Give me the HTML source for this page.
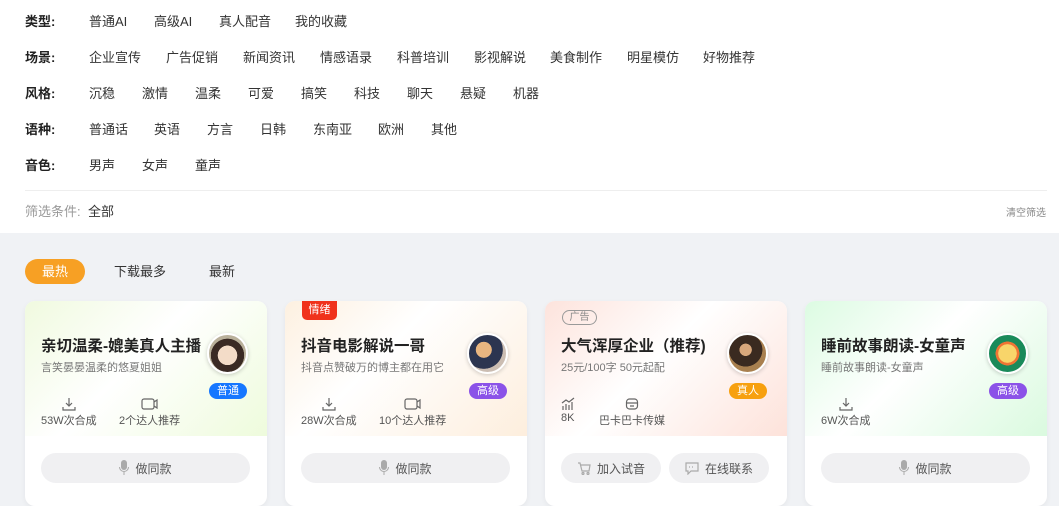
<!DOCTYPE html>
<html><head><meta charset="utf-8"><style>
*{margin:0;padding:0;box-sizing:border-box}
body{width:1059px;height:500px;overflow:hidden;background:#f0f2f5;font-family:"Liberation Sans","Noto Sans CJK SC",sans-serif;position:relative;color:#333}
.top{position:absolute;left:0;top:0;width:1059px;height:233px;background:#fff}
.a{position:absolute;white-space:nowrap;font-size:13px;line-height:16px}
.lb{font-weight:bold;color:#222}
.sep{position:absolute;left:25px;top:190px;width:1022px;height:1px;background:#eee}
.card{position:absolute;top:301px;width:242px;height:205px;border-radius:10px;background:#fff;overflow:hidden;box-shadow:0 2px 6px rgba(0,0,0,.05)}
.grad{position:absolute;left:0;top:0;width:100%;height:135px}
.t{position:absolute;left:16px;top:33px;font-size:15.5px;font-weight:bold;color:#222;white-space:nowrap}
.s{position:absolute;left:16px;top:58px;font-size:11px;color:#777;white-space:nowrap}
.av{position:absolute;left:182px;top:32px;width:41px;height:41px;border-radius:50%;border:2px solid #fff;box-shadow:0 1px 4px rgba(0,0,0,.2)}
.bd{position:absolute;left:184px;top:82px;width:38px;height:16px;border-radius:8px;color:#fff;font-size:11px;text-align:center;line-height:16px}
.st{position:absolute;top:96px;font-size:11px;color:#555;white-space:nowrap;text-align:center}
.st svg{display:block;margin:0 auto 1px}
.btn{position:absolute;top:152px;height:30px;border-radius:15px;background:#f0f0f2;font-size:12px;color:#555;display:flex;align-items:center;justify-content:center;gap:6px}
</style></head><body>
<div class="top"></div>
<div class="a lb" style="left:25px;top:14px">类型:</div>
<div class="a" style="left:89px;top:14px">普通AI</div><div class="a" style="left:154px;top:14px">高级AI</div><div class="a" style="left:219px;top:14px">真人配音</div><div class="a" style="left:295px;top:14px">我的收藏</div>
<div class="a lb" style="left:25px;top:50px">场景:</div>
<div class="a" style="left:89px;top:50px">企业宣传</div><div class="a" style="left:166px;top:50px">广告促销</div><div class="a" style="left:243px;top:50px">新闻资讯</div><div class="a" style="left:320px;top:50px">情感语录</div><div class="a" style="left:397px;top:50px">科普培训</div><div class="a" style="left:474px;top:50px">影视解说</div><div class="a" style="left:550px;top:50px">美食制作</div><div class="a" style="left:627px;top:50px">明星模仿</div><div class="a" style="left:703px;top:50px">好物推荐</div>
<div class="a lb" style="left:25px;top:86px">风格:</div>
<div class="a" style="left:89px;top:86px">沉稳</div><div class="a" style="left:142px;top:86px">激情</div><div class="a" style="left:195px;top:86px">温柔</div><div class="a" style="left:248px;top:86px">可爱</div><div class="a" style="left:301px;top:86px">搞笑</div><div class="a" style="left:354px;top:86px">科技</div><div class="a" style="left:407px;top:86px">聊天</div><div class="a" style="left:460px;top:86px">悬疑</div><div class="a" style="left:513px;top:86px">机器</div>
<div class="a lb" style="left:25px;top:122px">语种:</div>
<div class="a" style="left:89px;top:122px">普通话</div><div class="a" style="left:154px;top:122px">英语</div><div class="a" style="left:207px;top:122px">方言</div><div class="a" style="left:260px;top:122px">日韩</div><div class="a" style="left:313px;top:122px">东南亚</div><div class="a" style="left:378px;top:122px">欧洲</div><div class="a" style="left:431px;top:122px">其他</div>
<div class="a lb" style="left:25px;top:158px">音色:</div>
<div class="a" style="left:89px;top:158px">男声</div><div class="a" style="left:142px;top:158px">女声</div><div class="a" style="left:195px;top:158px">童声</div>
<div class="sep"></div>
<div class="a" style="left:25px;top:204px;color:#999">筛选条件:</div><div class="a" style="left:88px;top:204px">全部</div>
<div class="a" style="left:1006px;top:206px;font-size:10px;color:#888">清空筛选</div>

<div class="a" style="left:25px;top:259px;width:60px;height:25px;border-radius:13px;background:#f7a024;color:#fff;text-align:center;line-height:25px">最热</div>
<div class="a" style="left:114px;top:264px">下载最多</div>
<div class="a" style="left:209px;top:264px">最新</div>

<!-- card1 -->
<div class="card" style="left:25px">
<div class="grad" style="background:linear-gradient(135deg,#f0fadf 0%,#fff 45%,#eefbdc 100%)"></div>
<div class="t">亲切温柔-媲美真人主播</div><div class="s">言笑晏晏温柔的悠夏姐姐</div>
<div class="av" style="background:radial-gradient(circle at 50% 55%,#f3dcc8 0 35%,#3a2a24 36% 60%,#b9b09a 61%)"></div>
<div class="bd" style="background:#1677ff">普通</div>
<div class="st" style="left:16px"><svg width="14" height="14" viewBox="0 0 14 14" fill="none" stroke="#666" stroke-width="1.2"><path d="M7 1v8M4 6l3 3 3-3M1 10v3h12v-3"/></svg>53W次合成</div>
<div class="st" style="left:94px"><svg width="18" height="14" viewBox="0 0 18 14" fill="none" stroke="#666" stroke-width="1.2"><rect x="1" y="2" width="12" height="10" rx="2"/><path d="M13 5l3-2v8l-3-2"/></svg>2个达人推荐</div>
<div class="btn" style="left:16px;width:209px"><svg width="10" height="16" viewBox="0 0 10 16" fill="#aaa"><rect x="2" y="0" width="6" height="10" rx="3"/><path d="M0 7a5 5 0 0 0 10 0h-1a4 4 0 0 1-8 0zM4.5 12h1v3h-1z"/></svg>做同款</div>
</div>
<!-- card2 -->
<div class="card" style="left:285px">
<div class="grad" style="background:linear-gradient(135deg,#fdf0e0 0%,#fff 40%,#fdeedd 100%)"></div>
<div style="position:absolute;left:17px;top:0;width:35px;height:19px;background:#f0321c;border-radius:0 0 5px 5px;color:#fff;font-size:11px;text-align:center;line-height:19px">情绪</div>
<div class="t">抖音电影解说一哥</div><div class="s">抖音点赞破万的博主都在用它</div>
<div class="av" style="background:radial-gradient(circle at 40% 40%,#e9b680 0 25%,#2c3550 26% 60%,#cbbdb2 61%)"></div>
<div class="bd" style="background:#8b52e8">高级</div>
<div class="st" style="left:16px"><svg width="14" height="14" viewBox="0 0 14 14" fill="none" stroke="#666" stroke-width="1.2"><path d="M7 1v8M4 6l3 3 3-3M1 10v3h12v-3"/></svg>28W次合成</div>
<div class="st" style="left:94px"><svg width="18" height="14" viewBox="0 0 18 14" fill="none" stroke="#666" stroke-width="1.2"><rect x="1" y="2" width="12" height="10" rx="2"/><path d="M13 5l3-2v8l-3-2"/></svg>10个达人推荐</div>
<div class="btn" style="left:16px;width:209px"><svg width="10" height="16" viewBox="0 0 10 16" fill="#aaa"><rect x="2" y="0" width="6" height="10" rx="3"/><path d="M0 7a5 5 0 0 0 10 0h-1a4 4 0 0 1-8 0zM4.5 12h1v3h-1z"/></svg>做同款</div>
</div>
<!-- card3 -->
<div class="card" style="left:545px">
<div class="grad" style="background:linear-gradient(135deg,#fde3dc 0%,#fff 45%,#fde2da 100%)"></div>
<div style="position:absolute;left:17px;top:9px;width:35px;height:15px;border:1px solid #999;border-radius:8px;color:#888;font-size:10px;text-align:center;line-height:13px">广告</div>
<div class="t">大气浑厚企业（推荐)</div><div class="s">25元/100字 50元起配</div>
<div class="av" style="background:radial-gradient(circle at 45% 40%,#d9a87c 0 20%,#3a2a20 21% 55%,#a9804f 56%)"></div>
<div class="bd" style="background:#f7a00f">真人</div>
<div class="st" style="left:16px;text-align:left"><svg width="14" height="14" viewBox="0 0 14 14" fill="none" stroke="#666" stroke-width="1.2" style="margin:0 0 1px"><path d="M2 13V9M5 13V7M8 13V8M11 13V5M1 6l4-3 3 2 5-4"/></svg>8K</div>
<div class="st" style="left:54px"><svg width="14" height="14" viewBox="0 0 14 14" fill="none" stroke="#666" stroke-width="1.2"><rect x="1.5" y="2" width="11" height="10" rx="3"/><path d="M1.5 6h11M5 9h4"/></svg>巴卡巴卡传媒</div>
<div class="btn" style="left:16px;width:100px"><svg width="14" height="14" viewBox="0 0 14 14" fill="none" stroke="#aaa" stroke-width="1.2"><path d="M1 2h2l2 8h7l1-6H4"/><circle cx="6" cy="12.5" r="1"/><circle cx="11" cy="12.5" r="1"/></svg>加入试音</div>
<div class="btn" style="left:124px;width:100px"><svg width="14" height="14" viewBox="0 0 14 14" fill="none" stroke="#aaa" stroke-width="1.2"><path d="M1 2h12v8H6l-3 3v-3H1z"/><path d="M4 6h1M7 6h1M10 6h0"/></svg>在线联系</div>
</div>
<!-- card4 -->
<div class="card" style="left:805px">
<div class="grad" style="background:linear-gradient(135deg,#dcfbe2 0%,#fff 45%,#dafadf 100%)"></div>
<div class="t">睡前故事朗读-女童声</div><div class="s">睡前故事朗读-女童声</div>
<div class="av" style="background:radial-gradient(circle at 50% 50%,#f8d56a 0 35%,#ef7434 36% 45%,#1a8a5a 46%)"></div>
<div class="bd" style="background:#8b52e8">高级</div>
<div class="st" style="left:16px"><svg width="14" height="14" viewBox="0 0 14 14" fill="none" stroke="#666" stroke-width="1.2"><path d="M7 1v8M4 6l3 3 3-3M1 10v3h12v-3"/></svg>6W次合成</div>
<div class="btn" style="left:16px;width:209px"><svg width="10" height="16" viewBox="0 0 10 16" fill="#aaa"><rect x="2" y="0" width="6" height="10" rx="3"/><path d="M0 7a5 5 0 0 0 10 0h-1a4 4 0 0 1-8 0zM4.5 12h1v3h-1z"/></svg>做同款</div>
</div>
</body></html>
